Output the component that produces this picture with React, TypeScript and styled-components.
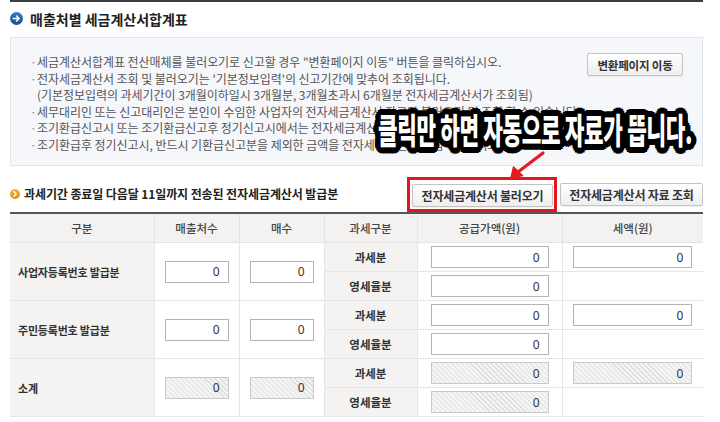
import React from "react";
import styled, { createGlobalStyle } from "styled-components";

const GlobalStyle = createGlobalStyle`
  html, body { margin: 0; padding: 0; background: #fff; }
  body {
    width: 720px;
    height: 422px;
    overflow: hidden;
    font-family: "Noto Sans CJK KR", "Noto Sans", sans-serif;
    color: #333;
  }
`;

const Page = styled.div`
  position: relative;
  width: 693px;
  margin-left: 10px;
`;

const TopRule = styled.div`
  height: 2px;
  background: #3c3c3c;
`;

const TitleRow = styled.h2`
  margin: 0;
  height: 33px;
  display: flex;
  align-items: center;
  gap: 7px;
  font-size: 14px;
  font-weight: 700;
  color: #222;
  letter-spacing: 0;
`;

const InfoBox = styled.div`
  margin-top: 2px;
  height: 129px;
  box-sizing: border-box;
  border: 1px solid #e2e5ea;
  background: #f5f7fb;
  padding: 16px 19px 0 19px;
  display: flex;
  justify-content: space-between;
  align-items: flex-start;
`;

const NoticeList = styled.ul`
  margin: 0;
  padding: 0;
  list-style: none;
  font-size: 12px;
  line-height: 16.5px;
  color: #555;
  letter-spacing: -0.05px;
  white-space: nowrap;
`;

const NoticeItem = styled.li<{ $plain?: boolean }>`
  display: flex;
  &::before {
    content: "${(p) => (p.$plain ? "" : "·")}";
    width: 7px;
    flex: none;
    color: #888;
  }
`;

const Button = styled.button<{ $w: number; $fs?: number }>`
  width: ${(p) => p.$w}px;
  height: 23px;
  box-sizing: border-box;
  padding: 0;
  border: 1px solid #c3c3c3;
  border-radius: 2px;
  background: linear-gradient(#ffffff, #eeeeee);
  box-shadow: 0 1px 1px rgba(0, 0, 0, 0.06);
  font-family: "Noto Sans CJK KR", "Noto Sans", sans-serif;
  font-size: ${(p) => p.$fs ?? 12}px;
  font-weight: 700;
  color: #333;
  letter-spacing: -0.2px;
  flex: none;
`;

const ConvertButton = styled(Button)`
  margin-top: -1px;
`;

const SectionBar = styled.div`
  margin-top: 11px;
  height: 35px;
  display: flex;
  align-items: center;
  gap: 3px;
`;

const SectionTitle = styled.h3`
  margin: 0 0 2px 0;
  flex: 1;
  display: flex;
  align-items: center;
  gap: 4px;
  font-size: 12px;
  font-weight: 700;
  color: #222;
  letter-spacing: -0.1px;
`;

const Highlight = styled.div`
  display: flex;
  border: 3px solid #e8141b;
  padding: 4px 1px 2px 2px;
`;

const Table = styled.table`
  width: 693px;
  border-collapse: collapse;
  table-layout: fixed;
  border-top: 2px solid #555;
  font-size: 11.5px;
`;

const Th = styled.th`
  height: 28px;
  padding: 0;
  background: #f3f2f0;
  color: #444;
  font-weight: 500;
  border: 1px solid #e3e3e3;
  border-top: none;
  &:first-child { border-left: none; }
  &:last-child { border-right: none; }
`;

const Td = styled.td<{ $label?: boolean; $left?: boolean }>`
  height: 28px;
  padding: 0 ${(p) => (p.$left ? "8px" : "0")};
  text-align: ${(p) => (p.$left ? "left" : "center")};
  background: ${(p) => (p.$label ? "#f4f3f1" : "#fff")};
  color: #333;
  font-size: ${(p) => (p.$left ? "11px" : "11.5px")};
  font-weight: ${(p) => (p.$label ? 700 : 400)};
  letter-spacing: ${(p) => (p.$left ? "-0.2px" : "0")};
  border: 1px solid #e6e6e6;
  &:first-child { border-left: none; }
  &:last-child { border-right: none; }
`;

const AmountInput = styled.input<{ $w: number; $locked?: boolean }>`
  display: block;
  margin: 0 auto;
  width: ${(p) => p.$w}px;
  height: 22px;
  box-sizing: border-box;
  border: 1px solid ${(p) => (p.$locked ? "#c9c9c9" : "#b4b4b4")};
  padding: 0 8px 0 0;
  text-align: right;
  font-family: "Noto Sans", sans-serif;
  font-size: 12px;
  color: #333;
  outline: none;
  background: ${(p) =>
    p.$locked
      ? "repeating-linear-gradient(45deg, #f4f4f4 0px, #f4f4f4 2.5px, #dedede 2.5px, #dedede 3.5px)"
      : "#fff"};
`;

const Callout = styled.div`
  position: absolute;
  left: 368px;
  top: 107px;
  font-family: "Noto Sans CJK KR", sans-serif;
  font-size: 35px;
  font-weight: 900;
  line-height: 44px;
  color: #fff;
  white-space: nowrap;
  letter-spacing: -0.5px;
  transform: scaleX(0.607);
  transform-origin: left center;
  text-shadow:
    0 0 1px #000,
    4px 0 0 #000, -4px 0 0 #000, 0 3px 0 #000, 0 -3px 0 #000,
    4px 2px 0 #000, -4px 2px 0 #000, 4px -2px 0 #000, -4px -2px 0 #000,
    8px 0 0 #000, -8px 0 0 #000, 0 5px 0 #000, 0 -5px 0 #000,
    7px 3px 0 #000, -7px 3px 0 #000, 7px -3px 0 #000, -7px -3px 0 #000,
    5px 5px 0 #000, -5px 5px 0 #000, 5px -5px 0 #000, -5px -5px 0 #000,
    9px 1px 0 #000, -9px 1px 0 #000, 9px -1px 0 #000, -9px -1px 0 #000,
    2px 6px 0 #000, -2px 6px 0 #000, 2px -6px 0 #000, -2px -6px 0 #000;
`;

const ArrowMark = styled.svg`
  position: absolute;
  left: 488px;
  top: 146px;
`;

const BlueIcon = () => (
  <svg width="13" height="13" viewBox="0 0 13 13">
    <defs>
      <linearGradient id="bg1" x1="0" y1="0" x2="0" y2="1">
        <stop offset="0" stopColor="#3a7cc4" />
        <stop offset="1" stopColor="#174f93" />
      </linearGradient>
    </defs>
    <circle cx="6.5" cy="6.5" r="6.5" fill="url(#bg1)" />
    <path d="M3.3 6.5H9M6.6 4L9.1 6.5L6.6 9" stroke="#fff" strokeWidth="1.6" fill="none" strokeLinecap="round" strokeLinejoin="round" />
  </svg>
);

const OrangeIcon = () => (
  <svg width="10" height="10" viewBox="0 0 10 10">
    <defs>
      <linearGradient id="og1" x1="0" y1="0" x2="0" y2="1">
        <stop offset="0" stopColor="#f7b733" />
        <stop offset="1" stopColor="#e58a10" />
      </linearGradient>
    </defs>
    <circle cx="5" cy="5" r="5" fill="url(#og1)" />
    <path d="M4 2.8L6.2 5L4 7.2" stroke="#fff" strokeWidth="1.5" fill="none" strokeLinecap="round" strokeLinejoin="round" />
  </svg>
);

const notices: { text: string; plain?: boolean }[] = [
  { text: "세금계산서합계표 전산매체를 불러오기로 신고할 경우 \"변환페이지 이동\" 버튼을 클릭하십시오." },
  { text: "전자세금계산서 조회 및 불러오기는 '기본정보입력'의 신고기간에 맞추어 조회됩니다." },
  { text: "(기본정보입력의 과세기간이 3개월이하일시 3개월분, 3개월초과시 6개월분 전자세금계산서가 조회됨)", plain: true },
  { text: "세무대리인 또는 신고대리인은 본인이 수임한 사업자의 전자세금계산서 자료만 불러오기 및 조회 할 수 있습니다." },
  { text: "조기환급신고시 또는 조기환급신고후 정기신고시에서는 전자세금계산서 자료를 확인하십시오." },
  { text: "조기환급후 정기신고시, 반드시 기환급신고분을 제외한 금액을 전자세금계산서로 입력하십시오." },
];

type Group = { label: string; locked?: boolean };
const groups: Group[] = [
  { label: "사업자등록번호 발급분" },
  { label: "주민등록번호 발급분" },
  { label: "소계", locked: true },
];

export default function App() {
  return (
    <>
      <GlobalStyle />
      <Page>
        <TopRule />
        <TitleRow>
          <BlueIcon />
          매출처별 세금계산서합계표
        </TitleRow>
        <InfoBox>
          <NoticeList>
            {notices.map((n, i) => (
              <NoticeItem key={i} $plain={n.plain}>
                {n.text}
              </NoticeItem>
            ))}
          </NoticeList>
          <ConvertButton $w={96} $fs={11.5}>변환페이지 이동</ConvertButton>
        </InfoBox>
        <SectionBar>
          <SectionTitle>
            <OrangeIcon />
            과세기간 종료일 다음달 11일까지 전송된 전자세금계산서 발급분
          </SectionTitle>
          <Highlight>
            <Button $w={141}>전자세금계산서 불러오기</Button>
          </Highlight>
          <Button $w={143}>전자세금계산서 자료 조회</Button>
        </SectionBar>
        <Table>
          <colgroup>
            <col style={{ width: 144 }} />
            <col style={{ width: 85 }} />
            <col style={{ width: 85 }} />
            <col style={{ width: 93 }} />
            <col style={{ width: 145 }} />
            <col style={{ width: 141 }} />
          </colgroup>
          <thead>
            <tr>
              <Th>구분</Th>
              <Th>매출처수</Th>
              <Th>매수</Th>
              <Th>과세구분</Th>
              <Th>공급가액(원)</Th>
              <Th>세액(원)</Th>
            </tr>
          </thead>
          <tbody>
            {groups.map((g) => (
              <React.Fragment key={g.label}>
                <tr>
                  <Td rowSpan={2} $label $left>
                    {g.label}
                  </Td>
                  <Td rowSpan={2}>
                    <AmountInput $w={64} $locked={g.locked} value="0" readOnly />
                  </Td>
                  <Td rowSpan={2}>
                    <AmountInput $w={64} $locked={g.locked} value="0" readOnly />
                  </Td>
                  <Td $label>과세분</Td>
                  <Td>
                    <AmountInput $w={118} $locked={g.locked} value="0" readOnly />
                  </Td>
                  <Td>
                    <AmountInput $w={119} $locked={g.locked} value="0" readOnly />
                  </Td>
                </tr>
                <tr>
                  <Td $label>영세율분</Td>
                  <Td>
                    <AmountInput $w={118} $locked={g.locked} value="0" readOnly />
                  </Td>
                  <Td />
                </tr>
              </React.Fragment>
            ))}
          </tbody>
        </Table>
        <Callout>클릭만 하면 자동으로 자료가 뜹니다.</Callout>
        <ArrowMark width="50" height="40" viewBox="0 0 50 40">
          <path d="M45 7L20 26" stroke="#e51c23" strokeWidth="3.2" strokeLinecap="round" />
          <path d="M13 32L15.5 21L24.5 29.5Z" fill="#e51c23" stroke="#e51c23" strokeWidth="1.5" strokeLinejoin="round" />
        </ArrowMark>
      </Page>
    </>
  );
}
